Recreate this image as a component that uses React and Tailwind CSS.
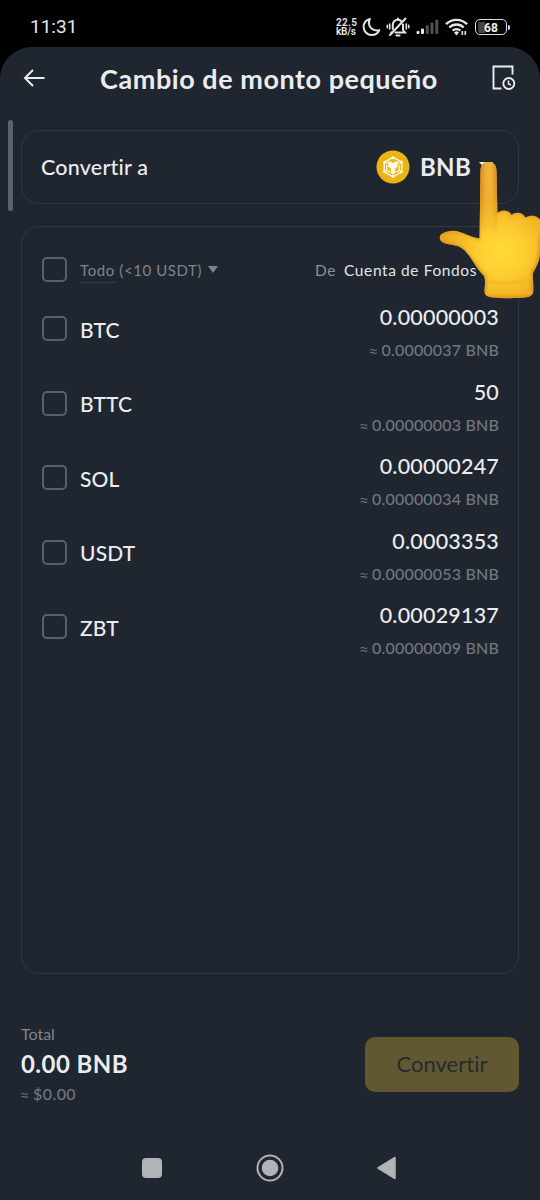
import React from "react";

const assets = [
  { symbol: "BTC", amount: "0.00000003", value: "0.0000037 BNB" },
  { symbol: "BTTC", amount: "50", value: "0.00000003 BNB" },
  { symbol: "SOL", amount: "0.00000247", value: "0.00000034 BNB" },
  { symbol: "USDT", amount: "0.0003353", value: "0.00000053 BNB" },
  { symbol: "ZBT", amount: "0.00029137", value: "0.00000009 BNB" },
];

const StatusBar = () => (
  <div className="h-[47px] shrink-0 flex items-center justify-between pl-[30px] pr-[30px] pt-[7px] text-[#e6e6e6] font-['Roboto',sans-serif]">
    <span className="text-[19px] leading-6">11:31</span>
    <div className="flex items-center">
      <div className="w-[22px] mr-px text-[10px] leading-[9px] font-semibold">
        <div className="tracking-[0.3px]">22.5</div>
        <div className="tracking-[-0.2px]">kB/s</div>
      </div>
      <svg className="ml-[3px]" width="20" height="20" viewBox="0 0 20 20" fill="none" stroke="currentColor" strokeWidth="2" strokeLinejoin="round">
        <path d="M7.800 2C3.800 3.200 1.400 6.600 1.600 10.300c.3 4.300 3.700 7.700 8 7.700 3.400 0 6.400-1.900 7.700-4.900-4.900 1.200-9.200-1.400-10.100-5.200-.4-2-.2-4.100.6-5.900z" />
      </svg>
      <svg className="ml-[4px]" width="24" height="22" viewBox="0 0 24 22" fill="none" stroke="currentColor" strokeWidth="2" strokeLinecap="round">
        <path d="M6.800 13V9c0-3.100 2-5.200 5-5.200 1.300 0 2.400.400 3.200 1.100M17 8.500V14l2 2.500H9.500M5.200 16.500h1" />
        <path d="M10.500 19.500h3M12 2.400v1M4 19 19.500 2.500" />
        <path d="M3.700 8v5M1.300 9.300v2.500M20.300 8v5M22.700 9.300v2.500" strokeWidth="1.600" />
      </svg>
      <svg className="ml-[6px]" width="23" height="16" viewBox="0 0 23 16" fill="currentColor">
        <rect x="0.500" y="12" width="3" height="3" rx="1" />
        <rect x="5" y="9.500" width="3" height="5.500" rx="1" />
        <g fill="#505050">
          <rect x="9.800" y="6.300" width="3" height="8.700" rx="1" />
          <rect x="14.500" y="3.500" width="3" height="11.500" rx="1" />
          <rect x="19.300" y="0.500" width="3" height="14.500" rx="1" />
        </g>
      </svg>
      <svg className="ml-[6px]" width="23" height="18" viewBox="0 0 23 18" fill="none" stroke="currentColor" strokeWidth="2.400">
        <path d="M1 6.200C6.800.4 16.200.4 22 6.200M4.300 9.500c4-4 10.400-4 14.400 0M7.700 12.700c2.100-2 5.500-2 7.600 0" />
        <path d="m9 14.500 2.500-1.400 2.500 1.400-2.500 3z" fill="currentColor" stroke="none" />
        <path d="M17.300 13v4M20.300 13v4" strokeWidth="1.600" />
      </svg>
      <div className="ml-[7px] flex items-center">
        <div className="w-[32px] h-[16px] rounded-[5px] border-[1.500px] border-[#dedede] p-[1.500px]">
          <div className="h-full rounded-[2px] bg-[linear-gradient(90deg,#444_25%,#050505_25%)] text-center text-[12px] leading-[12px] font-bold text-[#f0f0f0]">68</div>
        </div>
        <div className="w-[2px] h-[5px] ml-px rounded-r bg-[#dedede]" />
      </div>
    </div>
  </div>
);

const Checkbox = () => (
  <span className="block size-[25px] shrink-0 rounded-[5px] border-2 border-[#5a606a]" />
);

// Lato has no proper "≈", so the sign gets its own family
const Approx = () => (
  <span className="mr-[4px] text-[14px] font-['Noto_Sans',sans-serif]">≈</span>
);

const BnbIcon = () => (
  <svg width="34" height="34" viewBox="0 0 34 34" fill="none">
    <circle cx="17" cy="17" r="16.500" fill="#e9b414" />
    <path d="M17 7.300 25.700 12.200v9.700L17 26.800l-8.700-4.900v-9.700z" stroke="#fff6d0" strokeWidth="1.500" strokeLinejoin="round" />
    <path d="m10.500 13.500 3-1.800 3.500 2 3.500-2 3 1.800M10.700 15v5.300l3 1.800M23.300 15v5.300l-3 1.800" stroke="#fff6d0" strokeWidth="1.400" />
    <path d="m12.200 13.300 2.300-1.200 2.500 1.500 2.500-1.500 2.300 1.200v3.500l-2.500 1.400v5L17 24.500l-2.300-1.300v-5l-2.500-1.400z" fill="#fffbe8" />
    <g fill="#fffbe8">
      <circle cx="17" cy="7.700" r="1.500" />
      <circle cx="8.700" cy="12.300" r="1.500" />
      <circle cx="25.300" cy="12.300" r="1.500" />
      <circle cx="8.700" cy="21.700" r="1.500" />
      <circle cx="25.300" cy="21.700" r="1.500" />
      <circle cx="17" cy="26.300" r="1.500" />
    </g>
  </svg>
);

const PointingHand = () => (
  <svg className="absolute left-[436px] top-[158px]" width="104" height="144" viewBox="436 158 104 144">
    <defs>
      <radialGradient id="palm" gradientUnits="userSpaceOnUse" cx="501" cy="252" r="62">
        <stop offset="0" stopColor="#ffdb38" />
        <stop offset="0.400" stopColor="#fdcd30" />
        <stop offset="0.750" stopColor="#f4b426" />
        <stop offset="1" stopColor="#e9a41f" />
      </radialGradient>
      <linearGradient id="finger" x1="0" x2="1">
        <stop offset="0" stopColor="#dc8b17" />
        <stop offset="0.350" stopColor="#efb036" />
        <stop offset="0.650" stopColor="#f0b43b" />
        <stop offset="1" stopColor="#dc8b17" />
      </linearGradient>
      <linearGradient id="fade" x1="0" y1="0" x2="0" y2="1">
        <stop offset="0.350" stopColor="#fff" />
        <stop offset="1" stopColor="#000" />
      </linearGradient>
      <mask id="fingerMask" maskUnits="userSpaceOnUse" x="478" y="160" width="22" height="75">
        <rect x="478" y="160" width="22" height="75" fill="url(#fade)" />
      </mask>
      <filter id="soften" x="-10%" y="-10%" width="120%" height="120%">
        <feGaussianBlur stdDeviation="1.500" />
      </filter>
      <clipPath id="handClip">
        <path d="M480.500 171C480.500 165 483.500 162 488.500 162S496.500 165 496.500 171L497.500 213C501 209.500 508.500 209 511.500 215C515.500 211.500 523 212 525.500 217.500C531 214.500 537 215.500 540 219.500L540 255C539 262 536 267 533 273C532.500 279 534 287 533 293C531 297.500 526 297.500 521 297.800C511 298.500 501 298.300 493 297.500C488 297 485 296 484.500 292C484.500 286 486 281 484 276C479 271 476 266 472 260C468 253.500 464 249 459 246.500C454 244.500 448 245 444 243C440.500 241.500 439 239 440 236C442 232.500 447 231 453 230.700C462 231 469 237 479.500 238.500Z" />
      </clipPath>
    </defs>
    <g clipPath="url(#handClip)">
      <rect x="436" y="158" width="104" height="144" fill="url(#palm)" />
      <rect x="480" y="162" width="17" height="72" fill="url(#finger)" mask="url(#fingerMask)" />
      <g filter="url(#soften)" fill="none">
        <path d="M440 242c8 3 15 2 21 6 11 9 15 20 24 28v18M532.500 292v-20c5-8 8-16 8-38M484 297h49" stroke="#dc8e17" strokeWidth="2.500" />
        <path d="M497.500 212c3-3 11-3 14 3 4-4 11-3 14 2 5-3 11-2 15 2" stroke="#dc8c18" strokeWidth="2" />
        <path d="M441 234c10-5 24-1 38 5v-26" stroke="#e39a20" strokeWidth="2" />
        <path d="M486 281c14 3 31 2 46-2" stroke="#f0b028" strokeWidth="2" />
      </g>
    </g>
  </svg>
);

const App = () => {
  return (
    <div className="relative w-[540px] h-[1200px] overflow-hidden bg-black flex flex-col text-[#eaecef] font-['Lato',sans-serif] [font-variant-ligatures:none]">
      <StatusBar />
      <div className="flex-1 flex flex-col rounded-t-[32px] bg-[#202630]">
        <header className="h-[61px] flex items-center justify-between pl-[23px] pr-[24px]">
          <svg width="23" height="18" viewBox="0 0 23 18" fill="none" stroke="currentColor" strokeWidth="2">
            <path d="M21.500 9H2M10 1 2 9l8 8" />
          </svg>
          <h1 className="mt-[2px] text-[27px] leading-8 font-bold tracking-[0.540px]">Cambio de monto pequeño</h1>
          <svg width="24" height="26" viewBox="0 0 24 26" fill="none" stroke="currentColor" strokeWidth="1.900">
            <path d="M9.500 23.500H1.500V1.500h19v8" />
            <circle cx="16.800" cy="18.500" r="5.500" />
            <path d="M16.500 15.500v3.500l2.500 1" strokeWidth="1.500" />
          </svg>
        </header>

        <section className="mt-[22px] mx-[21px] h-[74px] shrink-0 flex items-center justify-between rounded-[18px] border-[1.500px] border-[#303740] pl-[19px] pr-[25px]">
          <span className="text-[21.500px] font-medium tracking-[0.220px]">Convertir a</span>
          <div className="flex items-center">
            <BnbIcon />
            <span className="ml-[10px] text-[24px] font-bold tracking-[0.300px]">BNB</span>
            <svg className="ml-[8px] mb-[2px]" width="14" height="8" viewBox="0 0 14 8" fill="currentColor">
              <path d="M0 0h14L7 8z" />
            </svg>
          </div>
        </section>

        <section className="mt-[22px] mx-[21px] h-[748px] shrink-0 rounded-[18px] border-[1.500px] border-[#303740] px-[20px] pt-[30px]">
          <div className="h-[25px] flex items-center">
            <Checkbox />
            <span className="ml-[13px] text-[15px] leading-[22px] tracking-[0.600px] text-[#7d838e]">
              <span className="pb-[3px] border-b border-dotted border-[#454c56]">Todo</span> (&lt;10 USDT)
            </span>
            <svg className="ml-[6px]" width="10" height="7" viewBox="0 0 10 7" fill="#7d838e">
              <path d="M0 0h10L5 7z" />
            </svg>
            <span className="ml-auto mt-[2px] text-[15.500px] tracking-[0.550px] text-[#8a909b]">De</span>
            <span className="ml-[8px] mr-[21px] mt-[2px] text-[15.500px] tracking-[0.600px] text-[#e2e4e9]">Cuenta de Fondos</span>
          </div>

          <div className="mt-[18px]">
            {assets.map((item) => (
              <div key={item.symbol} className="h-[74.500px] flex">
                <div className="mt-[16px] h-[25px] flex items-center gap-[13px]">
                  <Checkbox />
                  <span className="mt-[2px] text-[21px] font-medium tracking-[0.150px]">{item.symbol}</span>
                </div>
                <div className="ml-auto -mr-px text-right">
                  <div className="mt-[3px] text-[21.500px] leading-7 font-medium tracking-[0.200px]">{item.amount}</div>
                  <div className="mt-[9px] text-[16px] leading-5 font-medium tracking-[0.180px] text-[#707682]">
                    <Approx />
                    {item.value}
                  </div>
                </div>
              </div>
            ))}
          </div>
        </section>

        <footer className="mt-[48px] mx-[21px] flex justify-between">
          <div>
            <div className="text-[16px] leading-6 text-[#7d838e]">Total</div>
            <div className="mt-[2px] text-[24px] leading-8 font-bold tracking-[0.450px]">0.00 BNB</div>
            <div className="mt-[2px] text-[16px] leading-6 font-medium tracking-[0.400px] text-[#707682]">
              <Approx />
              $0.00
            </div>
          </div>
          <button className="mt-[15px] w-[154px] h-[55px] rounded-[10px] bg-[#615832] pb-[2px] text-[22px] leading-none text-[#252a30]">Convertir</button>
        </footer>

        <nav className="mt-auto mb-[18px] flex items-center justify-between pl-[142px] pr-[143px] text-[#b1b3b6]">
          <div className="size-[20px] rounded-[4px] bg-current" />
          <svg width="28" height="28" viewBox="0 0 28 28" fill="none">
            <circle cx="14" cy="14" r="12.500" stroke="currentColor" strokeWidth="2" />
            <circle cx="14" cy="14" r="8.300" fill="currentColor" />
          </svg>
          <svg width="20" height="24" viewBox="0 0 20 24" fill="currentColor" stroke="currentColor" strokeWidth="1.500" strokeLinejoin="round">
            <path d="M18 1.500v21L1 12z" />
          </svg>
        </nav>
      </div>

      <div className="absolute left-[8px] top-[120px] w-[5px] h-[91px] rounded-full bg-[#5c626a]" />
      <PointingHand />
    </div>
  );
};

export default App;
